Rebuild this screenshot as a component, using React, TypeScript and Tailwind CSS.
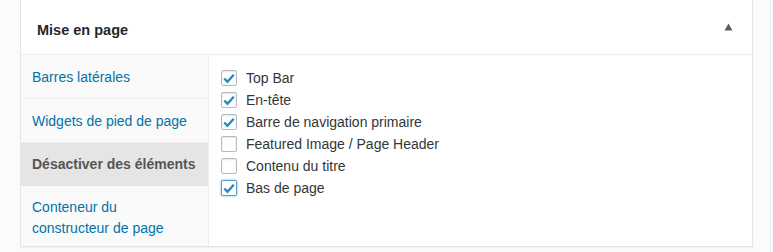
import React from "react";

const items = [
  { label: "Top Bar", checked: true },
  { label: "En-tête", checked: true },
  { label: "Barre de navigation primaire", checked: true },
  { label: "Featured Image / Page Header", checked: false },
  { label: "Contenu du titre", checked: false },
  { label: "Bas de page", checked: true, focus: true },
];

function Check({ checked, focus }: { checked: boolean; focus?: boolean }) {
  return (
    <span
      className={
        "flex h-4 w-4 items-center justify-center rounded-[2px] border bg-white " +
        (focus
          ? "border-[#5b9dd9] shadow-[0_0_2px_rgba(30,140,190,0.8)]"
          : "border-[#b4b9be] shadow-[inset_0_1px_2px_rgba(0,0,0,0.1)]")
      }
    >
      {checked && (
        <svg width="15" height="15" viewBox="0 0 20 20">
          <path d="M3.2 10 L7.8 14.6 L16.8 4.6" fill="none" stroke="#1e8cbe" strokeWidth="3.4" strokeLinecap="butt" strokeLinejoin="miter" />
        </svg>
      )}
    </span>
  );
}

export default function App() {
  return (
    <div className="h-[252px] w-[773px] overflow-hidden bg-[#fbfbfb]" style={{ fontFamily: '"Liberation Sans", Arial, sans-serif' }}>
      <div className="flex h-full">
        <div className="ml-[20px] flex h-[247px] w-[733px] flex-col border-x border-b border-[#e5e5e5] bg-white shadow-[0_1px_1px_rgba(0,0,0,0.04)]">
          <div className="flex h-[55px] items-center justify-between border-b border-[#eeeeee] pl-[16px] pr-[19px] pt-[7px]">
            <span className="text-[14.5px] font-bold text-[#23282d]">Mise en page</span>
            <svg width="9" height="8" viewBox="0 0 9 8" className="mt-[-7px]">
              <path d="M4.5 0.5 L8.5 7.5 L0.5 7.5 Z" fill="#555d66" />
            </svg>
          </div>
          <div className="flex flex-1">
            <div className="flex w-[188px] flex-col border-r border-[#eeeeee] bg-[#fafafa] text-[14px] leading-[21px]">
              <div className="border-b border-[#eeeeee] px-[11px] pb-[10px] pt-[12px] text-[#0073aa]">Barres latérales</div>
              <div className="border-b border-[#eeeeee] px-[11px] pb-[10px] pt-[12px] text-[#0073aa]">Widgets de pied de page</div>
              <div className="bg-[#e5e5e5] px-[11px] py-[11px] font-bold text-[#555555]">Désactiver des éléments</div>
              <div className="px-[11px] pt-[11px] text-[#0073aa]">
                Conteneur du
                <br />
                constructeur de page
              </div>
            </div>
            <div className="flex flex-col pl-[12px] pt-[12px]">
              {items.map((it) => (
                <div key={it.label} className="flex h-[22px] items-center gap-[9px] text-[14px] text-[#32373c]">
                  <Check checked={it.checked} focus={it.focus} />
                  <span>{it.label}</span>
                </div>
              ))}
            </div>
          </div>
        </div>
        <div className="ml-auto mr-[2px] w-px bg-[#e8e8e8]" />
      </div>
    </div>
  );
}
